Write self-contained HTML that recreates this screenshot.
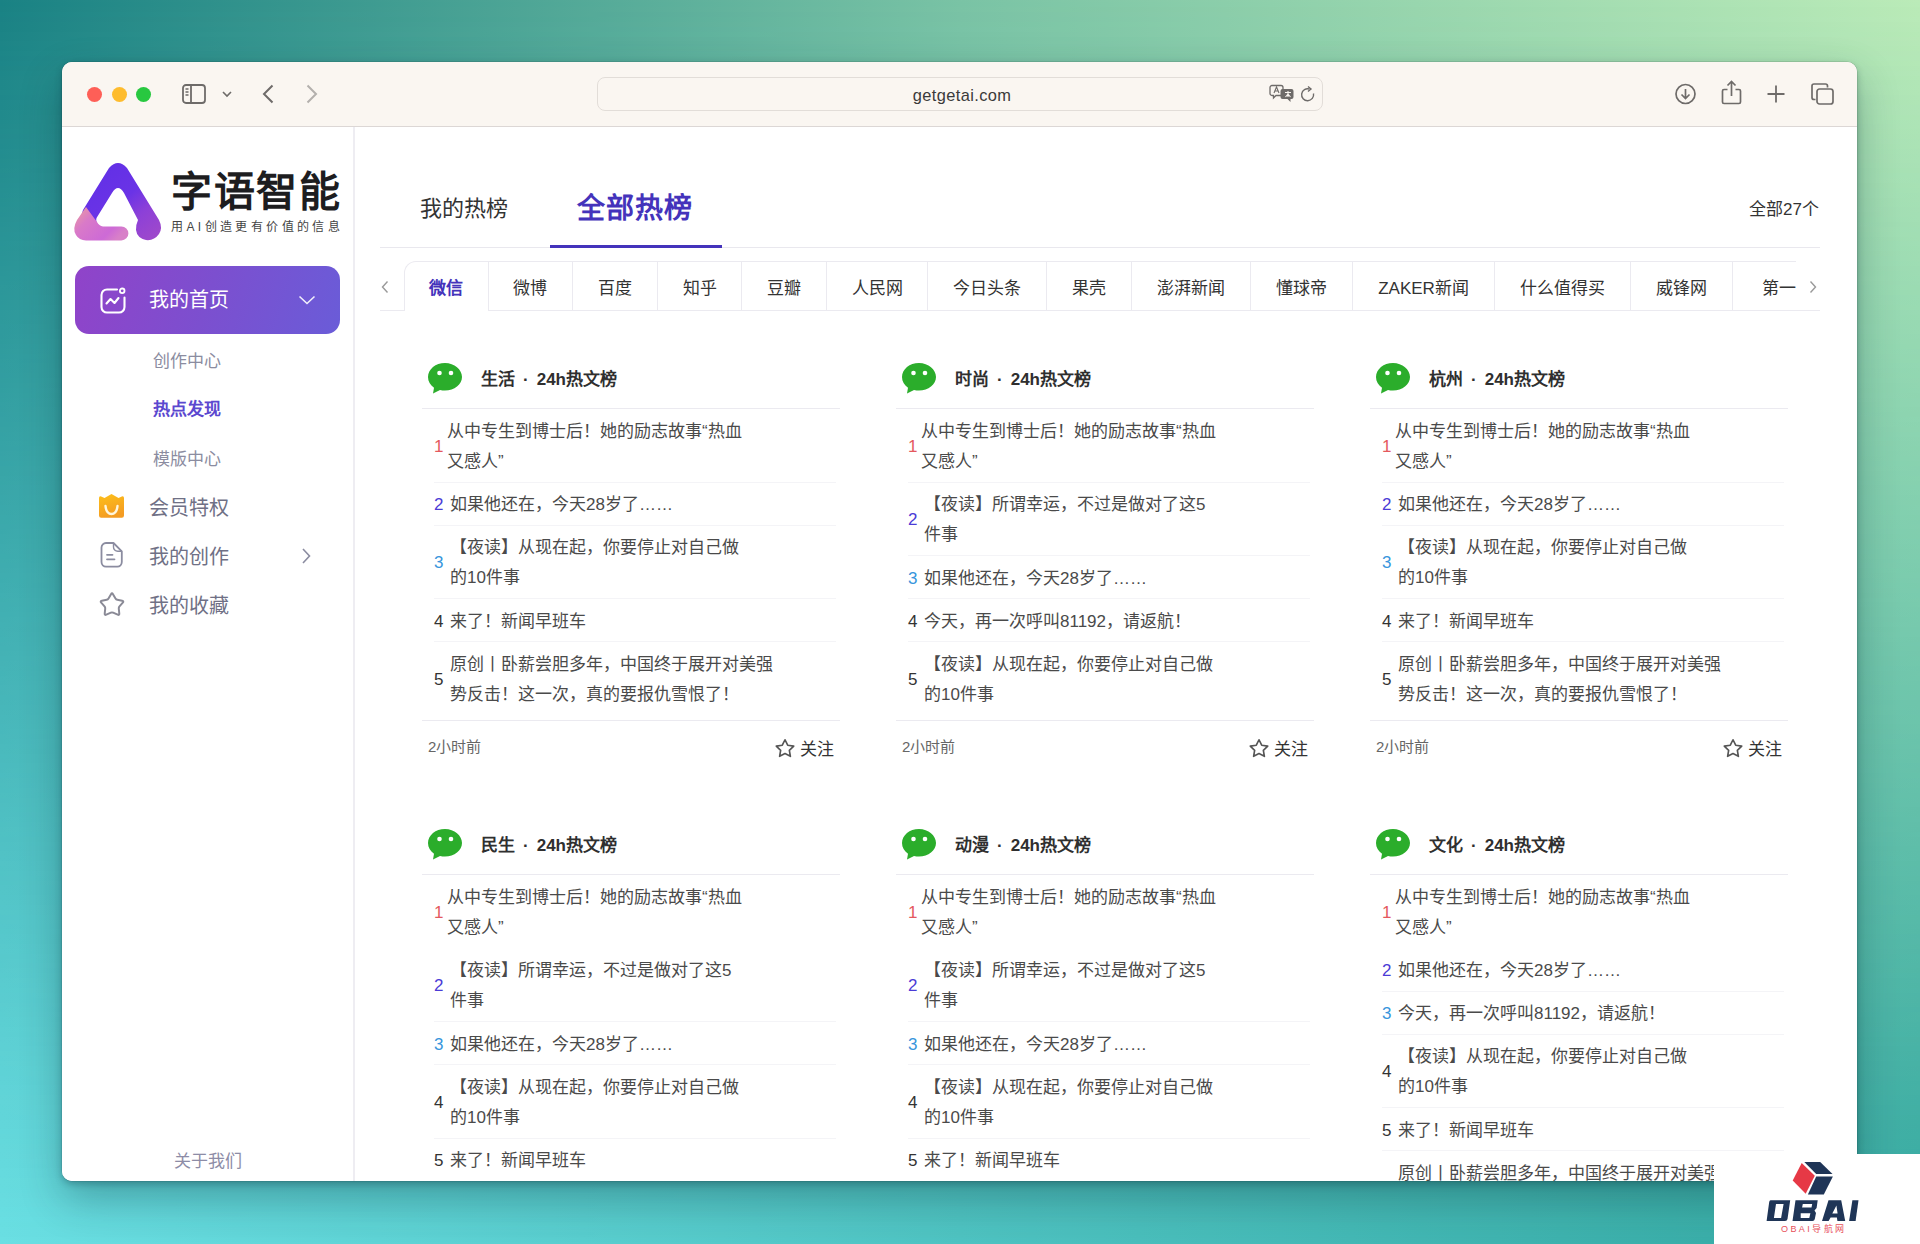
<!DOCTYPE html>
<html lang="zh-CN"><head><meta charset="utf-8">
<style>
*{box-sizing:border-box;margin:0;padding:0}
html,body{width:1920px;height:1244px;overflow:hidden}
body{position:relative;font-family:"Liberation Sans",sans-serif;color:#333;background:linear-gradient(to right,#1a8284 0%,#7ac3a5 50%,#bbebb8 100%)}
#bg2{position:absolute;left:0;top:0;width:1920px;height:1244px;background:linear-gradient(to right,#6adfe3 0%,#4ec3c2 50%,#33a8a2 100%);-webkit-mask-image:linear-gradient(to bottom,rgba(0,0,0,0) 0%,#000 100%);mask-image:linear-gradient(to bottom,rgba(0,0,0,0) 0%,#000 100%)}
#win{position:absolute;left:62px;top:62px;width:1795px;height:1119px;border-radius:10px;overflow:hidden;background:#fff;box-shadow:0 3px 7px rgba(0,40,50,.28),0 18px 42px rgba(0,40,50,.3),0 0 0 .5px rgba(0,0,0,.15)}
#pg{position:absolute;left:-62px;top:-62px;width:1920px;height:1244px}
.a{position:absolute;white-space:nowrap}
svg{position:absolute;overflow:visible}
#tb{position:absolute;left:62px;top:62px;width:1795px;height:65px;background:#faf6f1;border-bottom:1px solid #dcd7d5}
.dot{position:absolute;width:15px;height:15px;border-radius:50%;top:87px}
#url{position:absolute;left:597px;top:77px;width:726px;height:34px;border:1px solid #e2ddd8;border-radius:8px;background:#faf6f1;font-size:16.4px;color:#3a3a3a;text-align:center;line-height:35px;letter-spacing:.4px;padding-left:4px}
#side{position:absolute;left:62px;top:127px;width:293px;height:1054px;background:#fff;border-right:2px solid #eeedf2}
#navbtn{position:absolute;left:75px;top:266px;width:265px;height:68px;border-radius:14px;background:linear-gradient(108deg,#9043c9 0%,#7c4fcf 50%,#6a5cd8 100%)}
.sub{position:absolute;left:153px;font-size:17px;color:#8b8ca0;line-height:20px}
.nav{position:absolute;left:149px;font-size:20px;color:#6f7085;line-height:24px}
#wm{position:absolute;left:1714px;top:1154px;width:206px;height:90px;background:#fff}
.tab{position:absolute;top:262px;height:49px;line-height:54px;text-align:center;font-size:17px;color:#333;border-right:1px solid #ebeaf0}
.ln{position:absolute;height:1px;background:#ebeaf0}
.sep{position:absolute;height:1px;background:#f4f4f7}
.ct{position:absolute;font-size:17px;line-height:30px;color:#4a4a4a;white-space:nowrap}
.num{position:absolute;font-size:17px;line-height:30px;white-space:nowrap}
.ttl{position:absolute;font-size:17px;line-height:24px;color:#2f2f2f;font-weight:bold;white-space:nowrap}
.tm{position:absolute;font-size:15px;line-height:20px;color:#666;white-space:nowrap}
.fl{position:absolute;font-size:17px;line-height:24px;color:#333;white-space:nowrap}
</style></head><body>
<div id="bg2"></div>
<div id="win"><div id="pg">
<div id="tb"></div>
<div class="dot" style="left:87px;background:#fe5f57"></div>
<div class="dot" style="left:111.5px;background:#febc2e"></div>
<div class="dot" style="left:136px;background:#28c840"></div>
<svg style="left:181px;top:83px" width="26" height="22" viewBox="0 0 26 22"><rect x="2" y="2" width="22" height="18" rx="3" fill="none" stroke="#6e6b69" stroke-width="1.8"/><line x1="10" y1="2" x2="10" y2="20" stroke="#6e6b69" stroke-width="1.8"/><path d="M4.5 6h3M4.5 9h3M4.5 12h3" stroke="#6e6b69" stroke-width="1.3"/></svg>
<svg style="left:221px;top:89px" width="12" height="10" viewBox="0 0 12 10"><path d="M2 3l4 4 4-4" fill="none" stroke="#6e6b69" stroke-width="1.6"/></svg>
<svg style="left:260px;top:83px" width="16" height="22" viewBox="0 0 16 22"><path d="M12.5 2.5L4 11l8.5 8.5" fill="none" stroke="#6e6b69" stroke-width="2"/></svg>
<svg style="left:304px;top:83px" width="16" height="22" viewBox="0 0 16 22"><path d="M3.5 2.5L12 11l-8.5 8.5" fill="none" stroke="#b3b0ad" stroke-width="2"/></svg>
<div id="url">getgetai.com</div>
<svg style="left:1269px;top:84px" width="26" height="20" viewBox="0 0 26 20"><path d="M3 1.5h9a2 2 0 0 1 2 2v6a2 2 0 0 1-2 2H7l-2.5 2.5V11.5H3a2 2 0 0 1-2-2v-6a2 2 0 0 1 2-2z" fill="none" stroke="#6e6b69" stroke-width="1.3"/><path d="M5 9l2.5-6L10 9M6 7h3" fill="none" stroke="#6e6b69" stroke-width="1.1"/><path d="M13.5 5h9a2 2 0 0 1 2 2v6a2 2 0 0 1-2 2h-1v3l-3-3h-5a2 2 0 0 1-2-2V7a2 2 0 0 1 2-2z" fill="#6e6b69"/><path d="M16 8.5h6M19 7v6M16.5 13l2.5-3 2.5 3" fill="none" stroke="#faf6f1" stroke-width="1.1"/></svg>
<svg style="left:1300px;top:86px" width="18" height="18" viewBox="0 0 18 18"><path d="M13.5 7.5A6 6 0 1 1 9.5 3" fill="none" stroke="#6e6b69" stroke-width="1.4"/><path d="M8 0.5l3 2.5-3 2.5" fill="none" stroke="#6e6b69" stroke-width="1.4"/></svg>
<svg style="left:1674px;top:83px" width="24" height="24" viewBox="0 0 24 24"><circle cx="11.5" cy="11" r="9.5" fill="none" stroke="#6e6b69" stroke-width="1.7"/><path d="M11.5 6v9M7.5 11.5l4 4 4-4" fill="none" stroke="#6e6b69" stroke-width="1.7"/></svg>
<svg style="left:1720px;top:80px" width="24" height="26" viewBox="0 0 24 26"><path d="M7.5 9.5H4a1.5 1.5 0 0 0-1.5 1.5v11A1.5 1.5 0 0 0 4 23.5h15a1.5 1.5 0 0 0 1.5-1.5V11A1.5 1.5 0 0 0 19 9.5h-3.5M11.5 16V2M7.5 5.5l4-4 4 4" fill="none" stroke="#6e6b69" stroke-width="1.7"/></svg>
<svg style="left:1766px;top:84px" width="20" height="20" viewBox="0 0 20 20"><path d="M10 1.5v17M1.5 10h17" fill="none" stroke="#6e6b69" stroke-width="1.8"/></svg>
<svg style="left:1810px;top:82px" width="26" height="24" viewBox="0 0 26 24"><path d="M5.5 17.5H4A2 2 0 0 1 2 15.5V4a2 2 0 0 1 2-2h11.5a2 2 0 0 1 2 2v1.5" fill="none" stroke="#6e6b69" stroke-width="1.7"/><rect x="7" y="7" width="16" height="15" rx="2.5" fill="none" stroke="#6e6b69" stroke-width="1.7"/></svg>
<div id="side"></div>
<svg style="left:70px;top:158px" width="96" height="88" viewBox="0 0 96 88">
<defs>
<linearGradient id="lg1" x1="0.2" y1="0.1" x2="0.9" y2="0.95"><stop offset="0" stop-color="#6230e6"/><stop offset="0.45" stop-color="#6a33e6"/><stop offset="0.7" stop-color="#8c40d8"/><stop offset="1" stop-color="#9d48cc"/></linearGradient>
<linearGradient id="lg2" x1="0" y1="0" x2="1" y2="0.6"><stop offset="0" stop-color="#eca09a"/><stop offset="0.35" stop-color="#d97ac8"/><stop offset="0.8" stop-color="#cd6ad6"/><stop offset="1" stop-color="#d880c8"/></linearGradient>
</defs>
<path d="M13 52L39 10Q48 0 57 10L89 62Q93 70 89 76Q84 83 76 82Q67 80 66 72Q66 66 68 62L54 35Q48 25 42 35L26.5 60Q25 65 30 68.4L40 72L10 62Z" fill="url(#lg1)"/>
<path d="M16 49L7 62Q2 71 6 77Q9 82.4 16 82.4L51.4 82.4A7 7 0 0 0 51.4 68.4L33 68.4Q29 68 27 64Z" fill="url(#lg2)"/>
</svg>
<div class="a" style="left:171px;top:165px;font-size:41px;line-height:54px;color:#1d1d1f;font-weight:bold;letter-spacing:1.5px">字语智能</div>
<div class="a" style="left:171px;top:219px;font-size:12px;line-height:16px;color:#444;letter-spacing:3.4px">用AI创造更有价值的信息</div>
<div id="navbtn"></div>
<svg style="left:98px;top:286px" width="30" height="30" viewBox="0 0 30 30"><path d="M19 3.5H9A5.5 5.5 0 0 0 3.5 9v12A5.5 5.5 0 0 0 9 26.5h12A5.5 5.5 0 0 0 26.5 21V11.5" fill="none" stroke="#fff" stroke-width="2.1" stroke-linecap="round"/><circle cx="24.2" cy="4.8" r="2.3" fill="none" stroke="#fff" stroke-width="1.8"/><path d="M8.5 17.5l4-4.5 4 4 4-5" fill="none" stroke="#fff" stroke-width="2.1" stroke-linecap="round" stroke-linejoin="round"/></svg>
<div class="a nav" style="left:149px;top:288px;color:#fff">我的首页</div>
<svg style="left:297px;top:293px" width="20" height="14" viewBox="0 0 20 14"><path d="M2.5 3.5l7.5 7 7.5-7" fill="none" stroke="#fff" stroke-width="1.6" opacity=".9"/></svg>
<div class="a sub" style="top:351.5px">创作中心</div>
<div class="a sub" style="top:400px;color:#5b48cf;font-weight:bold">热点发现</div>
<div class="a sub" style="top:449.5px">模版中心</div>
<svg style="left:98px;top:493px" width="28" height="26" viewBox="0 0 28 26"><defs><linearGradient id="cg" x1="0" y1="0" x2="0.3" y2="1"><stop offset="0" stop-color="#fdc01a"/><stop offset="1" stop-color="#f49c22"/></linearGradient></defs><path d="M1 5Q1 2.8 3.2 3.5L6.5 5L13.5 1L20.5 5L23.8 3.5Q26 2.8 26 5V22.5Q26 24.7 23.8 24.7H3.2Q1 24.7 1 22.5Z" fill="url(#cg)"/><path d="M7.5 13c.5 5 3 8 6 8s5.5-3 6-8" fill="none" stroke="#fff6dc" stroke-width="2.4" stroke-linecap="round"/></svg>
<div class="a nav" style="top:495.5px">会员特权</div>
<svg style="left:99px;top:541px" width="26" height="28" viewBox="0 0 26 28"><path d="M14.5 2H7A4.5 4.5 0 0 0 2.5 6.5v14.6A4.5 4.5 0 0 0 7 25.6h11.3a4.5 4.5 0 0 0 4.5-4.5V10.3z" fill="none" stroke="#8b8ca0" stroke-width="1.8" stroke-linejoin="round"/><path d="M14.5 2v4a4.2 4.2 0 0 0 4.2 4.3h4.1" fill="none" stroke="#8b8ca0" stroke-width="1.4"/><path d="M8 13.8h5.5M8 18.3h7.5" stroke="#8b8ca0" stroke-width="1.8" stroke-linecap="round"/></svg>
<div class="a nav" style="top:544.8px">我的创作</div>
<svg style="left:299px;top:546px" width="14" height="20" viewBox="0 0 14 20"><path d="M4 3l6.5 7L4 17" fill="none" stroke="#8b8ca0" stroke-width="1.6"/></svg>
<svg style="left:98px;top:590px" width="28" height="28" viewBox="0 0 24 24"><path d="M11.15 3.55L11.15 3.55Q12.00 2.10 12.85 3.55L15.00 7.24Q15.53 8.15 16.55 8.37L20.72 9.28Q22.37 9.63 21.25 10.89L18.41 14.07Q17.71 14.85 17.81 15.90L18.24 20.15Q18.41 21.82 16.87 21.14L12.96 19.42Q12.00 19.00 11.04 19.42L7.13 21.14Q5.59 21.82 5.76 20.15L6.19 15.90Q6.29 14.85 5.59 14.07L2.75 10.89Q1.63 9.63 3.28 9.28L7.45 8.37Q8.47 8.15 9.00 7.24Z" fill="none" stroke="#8a8a96" stroke-width="1.7" stroke-linejoin="round"/></svg>
<div class="a nav" style="top:593.8px">我的收藏</div>
<div class="a sub" style="left:174px;top:1151.5px;color:#8d8ca6">关于我们</div>
<div class="ln" style="left:380px;top:247px;width:1440px;background:#e9e8ee"></div>
<div class="a" style="left:420px;top:194.5px;font-size:22px;line-height:28px;color:#333">我的热榜</div>
<div class="a" style="left:577px;top:189.5px;font-size:28px;line-height:38px;color:#4433bb;font-weight:bold;letter-spacing:1px">全部热榜</div>
<div class="a" style="left:550px;top:245px;width:172px;height:3px;background:#4433bb"></div>
<div class="a" style="left:1749px;top:198.5px;font-size:17px;line-height:22px;color:#333">全部27个</div>
<div style="position:absolute;left:380px;top:255px;width:1440px;height:60px;overflow:hidden">
<div class="ln" style="left:0;top:55px;width:1440px"></div>
<div class="tab" style="left:23.5px;top:6px;width:85.0px;border-left:1px solid #ebeaf0;border-top:1px solid #ebeaf0;border-top-left-radius:12px;background:#fff;height:50px;color:#4433bb;font-weight:bold">微信</div>
<div class="tab" style="left:108.5px;top:6px;width:84.5px;border-top:1px solid #ebeaf0;color:#333">微博</div>
<div class="tab" style="left:193.0px;top:6px;width:85.0px;border-top:1px solid #ebeaf0;color:#333">百度</div>
<div class="tab" style="left:278.0px;top:6px;width:84.0px;border-top:1px solid #ebeaf0;color:#333">知乎</div>
<div class="tab" style="left:362.0px;top:6px;width:85.0px;border-top:1px solid #ebeaf0;color:#333">豆瓣</div>
<div class="tab" style="left:447.0px;top:6px;width:101.0px;border-top:1px solid #ebeaf0;color:#333">人民网</div>
<div class="tab" style="left:548.0px;top:6px;width:119.0px;border-top:1px solid #ebeaf0;color:#333">今日头条</div>
<div class="tab" style="left:667.0px;top:6px;width:85.0px;border-top:1px solid #ebeaf0;color:#333">果壳</div>
<div class="tab" style="left:752.0px;top:6px;width:119.0px;border-top:1px solid #ebeaf0;color:#333">澎湃新闻</div>
<div class="tab" style="left:871.0px;top:6px;width:102.0px;border-top:1px solid #ebeaf0;color:#333">懂球帝</div>
<div class="tab" style="left:973.0px;top:6px;width:142.0px;border-top:1px solid #ebeaf0;color:#333">ZAKER新闻</div>
<div class="tab" style="left:1115.0px;top:6px;width:136.0px;border-top:1px solid #ebeaf0;color:#333">什么值得买</div>
<div class="tab" style="left:1251.0px;top:6px;width:102.0px;border-top:1px solid #ebeaf0;color:#333">威锋网</div>
<div class="tab" style="left:1353.0px;top:6px;width:127.0px;border-top:1px solid #ebeaf0;color:#333">第一财经</div>
</div>
<div class="a" style="left:1796px;top:258px;width:30px;height:52px;background:#fff"></div>
<svg style="left:380px;top:280px" width="10" height="14" viewBox="0 0 10 14"><path d="M7.5 1.5L2.5 7l5 5.5" fill="none" stroke="#999" stroke-width="1.4"/></svg>
<svg style="left:1808px;top:280px" width="10" height="14" viewBox="0 0 10 14"><path d="M2.5 1.5L7.5 7l-5 5.5" fill="none" stroke="#999" stroke-width="1.4"/></svg>
<svg style="left:428px;top:363px" width="34" height="31" viewBox="0 0 34 31">
<path d="M17 0C7.6 0 0 6.2 0 14c0 4.3 2.3 8.2 6 10.8L5 30.5l7-3.6c1.6.4 3.3.6 5 .6 9.4 0 17-6.2 17-13.5S26.4 0 17 0z" fill="#2bad2b"/>
<circle cx="11.5" cy="10" r="2.3" fill="#fff"/><circle cx="23" cy="10" r="2.3" fill="#fff"/></svg>
<div class="ttl" style="left:481px;top:368.2px">生活<span style="padding:0 8px 0 8px">·</span>24h热文榜</div>
<div class="ln" style="left:422px;top:408px;width:418px"></div>
<div class="num" style="left:434px;top:431.5px;color:#e4585e">1</div>
<div class="ct" style="left:447px;top:416.8px">从中专生到博士后！她的励志故事“热血<br>又感人”</div>
<div class="sep" style="left:434px;top:481.5px;width:402px"></div>
<div class="num" style="left:434px;top:490.0px;color:#4b3bd6">2</div>
<div class="ct" style="left:450px;top:490.3px">如果他还在，今天28岁了……</div>
<div class="sep" style="left:434px;top:524.5px;width:402px"></div>
<div class="num" style="left:434px;top:548.0px;color:#3795dc">3</div>
<div class="ct" style="left:450px;top:533.3px">【夜读】从现在起，你要停止对自己做<br>的10件事</div>
<div class="sep" style="left:434px;top:598.0px;width:402px"></div>
<div class="num" style="left:434px;top:606.5px;color:#333">4</div>
<div class="ct" style="left:450px;top:606.8px">来了！新闻早班车</div>
<div class="sep" style="left:434px;top:641.0px;width:402px"></div>
<div class="num" style="left:434px;top:664.5px;color:#333">5</div>
<div class="ct" style="left:450px;top:649.8px">原创丨卧薪尝胆多年，中国终于展开对美强<br>势反击！这一次，真的要报仇雪恨了！</div>
<div class="ln" style="left:422px;top:720px;width:418px"></div>
<div class="tm" style="left:428px;top:737px">2小时前</div>
<svg style="left:773.5px;top:737px" width="22" height="22" viewBox="0 0 24 24"><path d="M12.00 3.00L14.94 8.95L21.51 9.91L16.76 14.55L17.88 21.09L12.00 18.00L6.12 21.09L7.24 14.55L2.49 9.91L9.06 8.95Z" fill="none" stroke="#555" stroke-width="1.8" stroke-linejoin="round"/></svg>
<div class="fl" style="left:800px;top:737.5px">关注</div><svg style="left:902px;top:363px" width="34" height="31" viewBox="0 0 34 31">
<path d="M17 0C7.6 0 0 6.2 0 14c0 4.3 2.3 8.2 6 10.8L5 30.5l7-3.6c1.6.4 3.3.6 5 .6 9.4 0 17-6.2 17-13.5S26.4 0 17 0z" fill="#2bad2b"/>
<circle cx="11.5" cy="10" r="2.3" fill="#fff"/><circle cx="23" cy="10" r="2.3" fill="#fff"/></svg>
<div class="ttl" style="left:955px;top:368.2px">时尚<span style="padding:0 8px 0 8px">·</span>24h热文榜</div>
<div class="ln" style="left:896px;top:408px;width:418px"></div>
<div class="num" style="left:908px;top:431.5px;color:#e4585e">1</div>
<div class="ct" style="left:921px;top:416.8px">从中专生到博士后！她的励志故事“热血<br>又感人”</div>
<div class="sep" style="left:908px;top:481.5px;width:402px"></div>
<div class="num" style="left:908px;top:505.0px;color:#4b3bd6">2</div>
<div class="ct" style="left:924px;top:490.3px">【夜读】所谓幸运，不过是做对了这5<br>件事</div>
<div class="sep" style="left:908px;top:555.0px;width:402px"></div>
<div class="num" style="left:908px;top:563.5px;color:#3795dc">3</div>
<div class="ct" style="left:924px;top:563.8px">如果他还在，今天28岁了……</div>
<div class="sep" style="left:908px;top:598.0px;width:402px"></div>
<div class="num" style="left:908px;top:606.5px;color:#333">4</div>
<div class="ct" style="left:924px;top:606.8px">今天，再一次呼叫81192，请返航！</div>
<div class="sep" style="left:908px;top:641.0px;width:402px"></div>
<div class="num" style="left:908px;top:664.5px;color:#333">5</div>
<div class="ct" style="left:924px;top:649.8px">【夜读】从现在起，你要停止对自己做<br>的10件事</div>
<div class="ln" style="left:896px;top:720px;width:418px"></div>
<div class="tm" style="left:902px;top:737px">2小时前</div>
<svg style="left:1247.5px;top:737px" width="22" height="22" viewBox="0 0 24 24"><path d="M12.00 3.00L14.94 8.95L21.51 9.91L16.76 14.55L17.88 21.09L12.00 18.00L6.12 21.09L7.24 14.55L2.49 9.91L9.06 8.95Z" fill="none" stroke="#555" stroke-width="1.8" stroke-linejoin="round"/></svg>
<div class="fl" style="left:1274px;top:737.5px">关注</div><svg style="left:1376px;top:363px" width="34" height="31" viewBox="0 0 34 31">
<path d="M17 0C7.6 0 0 6.2 0 14c0 4.3 2.3 8.2 6 10.8L5 30.5l7-3.6c1.6.4 3.3.6 5 .6 9.4 0 17-6.2 17-13.5S26.4 0 17 0z" fill="#2bad2b"/>
<circle cx="11.5" cy="10" r="2.3" fill="#fff"/><circle cx="23" cy="10" r="2.3" fill="#fff"/></svg>
<div class="ttl" style="left:1429px;top:368.2px">杭州<span style="padding:0 8px 0 8px">·</span>24h热文榜</div>
<div class="ln" style="left:1370px;top:408px;width:418px"></div>
<div class="num" style="left:1382px;top:431.5px;color:#e4585e">1</div>
<div class="ct" style="left:1395px;top:416.8px">从中专生到博士后！她的励志故事“热血<br>又感人”</div>
<div class="sep" style="left:1382px;top:481.5px;width:402px"></div>
<div class="num" style="left:1382px;top:490.0px;color:#4b3bd6">2</div>
<div class="ct" style="left:1398px;top:490.3px">如果他还在，今天28岁了……</div>
<div class="sep" style="left:1382px;top:524.5px;width:402px"></div>
<div class="num" style="left:1382px;top:548.0px;color:#3795dc">3</div>
<div class="ct" style="left:1398px;top:533.3px">【夜读】从现在起，你要停止对自己做<br>的10件事</div>
<div class="sep" style="left:1382px;top:598.0px;width:402px"></div>
<div class="num" style="left:1382px;top:606.5px;color:#333">4</div>
<div class="ct" style="left:1398px;top:606.8px">来了！新闻早班车</div>
<div class="sep" style="left:1382px;top:641.0px;width:402px"></div>
<div class="num" style="left:1382px;top:664.5px;color:#333">5</div>
<div class="ct" style="left:1398px;top:649.8px">原创丨卧薪尝胆多年，中国终于展开对美强<br>势反击！这一次，真的要报仇雪恨了！</div>
<div class="ln" style="left:1370px;top:720px;width:418px"></div>
<div class="tm" style="left:1376px;top:737px">2小时前</div>
<svg style="left:1721.5px;top:737px" width="22" height="22" viewBox="0 0 24 24"><path d="M12.00 3.00L14.94 8.95L21.51 9.91L16.76 14.55L17.88 21.09L12.00 18.00L6.12 21.09L7.24 14.55L2.49 9.91L9.06 8.95Z" fill="none" stroke="#555" stroke-width="1.8" stroke-linejoin="round"/></svg>
<div class="fl" style="left:1748px;top:737.5px">关注</div><svg style="left:428px;top:829px" width="34" height="31" viewBox="0 0 34 31">
<path d="M17 0C7.6 0 0 6.2 0 14c0 4.3 2.3 8.2 6 10.8L5 30.5l7-3.6c1.6.4 3.3.6 5 .6 9.4 0 17-6.2 17-13.5S26.4 0 17 0z" fill="#2bad2b"/>
<circle cx="11.5" cy="10" r="2.3" fill="#fff"/><circle cx="23" cy="10" r="2.3" fill="#fff"/></svg>
<div class="ttl" style="left:481px;top:834.2px">民生<span style="padding:0 8px 0 8px">·</span>24h热文榜</div>
<div class="ln" style="left:422px;top:874px;width:418px"></div>
<div class="num" style="left:434px;top:897.5px;color:#e4585e">1</div>
<div class="ct" style="left:447px;top:882.8px">从中专生到博士后！她的励志故事“热血<br>又感人”</div>
<div class="num" style="left:434px;top:971.0px;color:#4b3bd6">2</div>
<div class="ct" style="left:450px;top:956.3px">【夜读】所谓幸运，不过是做对了这5<br>件事</div>
<div class="sep" style="left:434px;top:1021.0px;width:402px"></div>
<div class="num" style="left:434px;top:1029.5px;color:#3795dc">3</div>
<div class="ct" style="left:450px;top:1029.8px">如果他还在，今天28岁了……</div>
<div class="sep" style="left:434px;top:1064.0px;width:402px"></div>
<div class="num" style="left:434px;top:1087.5px;color:#333">4</div>
<div class="ct" style="left:450px;top:1072.8px">【夜读】从现在起，你要停止对自己做<br>的10件事</div>
<div class="sep" style="left:434px;top:1137.5px;width:402px"></div>
<div class="num" style="left:434px;top:1146.0px;color:#333">5</div>
<div class="ct" style="left:450px;top:1146.3px">来了！新闻早班车</div>
<div class="ln" style="left:422px;top:1186px;width:418px"></div>
<div class="tm" style="left:428px;top:1203px">2小时前</div>
<svg style="left:773.5px;top:1203px" width="22" height="22" viewBox="0 0 24 24"><path d="M12.00 3.00L14.94 8.95L21.51 9.91L16.76 14.55L17.88 21.09L12.00 18.00L6.12 21.09L7.24 14.55L2.49 9.91L9.06 8.95Z" fill="none" stroke="#555" stroke-width="1.8" stroke-linejoin="round"/></svg>
<div class="fl" style="left:800px;top:1203.5px">关注</div><svg style="left:902px;top:829px" width="34" height="31" viewBox="0 0 34 31">
<path d="M17 0C7.6 0 0 6.2 0 14c0 4.3 2.3 8.2 6 10.8L5 30.5l7-3.6c1.6.4 3.3.6 5 .6 9.4 0 17-6.2 17-13.5S26.4 0 17 0z" fill="#2bad2b"/>
<circle cx="11.5" cy="10" r="2.3" fill="#fff"/><circle cx="23" cy="10" r="2.3" fill="#fff"/></svg>
<div class="ttl" style="left:955px;top:834.2px">动漫<span style="padding:0 8px 0 8px">·</span>24h热文榜</div>
<div class="ln" style="left:896px;top:874px;width:418px"></div>
<div class="num" style="left:908px;top:897.5px;color:#e4585e">1</div>
<div class="ct" style="left:921px;top:882.8px">从中专生到博士后！她的励志故事“热血<br>又感人”</div>
<div class="num" style="left:908px;top:971.0px;color:#4b3bd6">2</div>
<div class="ct" style="left:924px;top:956.3px">【夜读】所谓幸运，不过是做对了这5<br>件事</div>
<div class="sep" style="left:908px;top:1021.0px;width:402px"></div>
<div class="num" style="left:908px;top:1029.5px;color:#3795dc">3</div>
<div class="ct" style="left:924px;top:1029.8px">如果他还在，今天28岁了……</div>
<div class="sep" style="left:908px;top:1064.0px;width:402px"></div>
<div class="num" style="left:908px;top:1087.5px;color:#333">4</div>
<div class="ct" style="left:924px;top:1072.8px">【夜读】从现在起，你要停止对自己做<br>的10件事</div>
<div class="sep" style="left:908px;top:1137.5px;width:402px"></div>
<div class="num" style="left:908px;top:1146.0px;color:#333">5</div>
<div class="ct" style="left:924px;top:1146.3px">来了！新闻早班车</div>
<div class="ln" style="left:896px;top:1186px;width:418px"></div>
<div class="tm" style="left:902px;top:1203px">2小时前</div>
<svg style="left:1247.5px;top:1203px" width="22" height="22" viewBox="0 0 24 24"><path d="M12.00 3.00L14.94 8.95L21.51 9.91L16.76 14.55L17.88 21.09L12.00 18.00L6.12 21.09L7.24 14.55L2.49 9.91L9.06 8.95Z" fill="none" stroke="#555" stroke-width="1.8" stroke-linejoin="round"/></svg>
<div class="fl" style="left:1274px;top:1203.5px">关注</div><svg style="left:1376px;top:829px" width="34" height="31" viewBox="0 0 34 31">
<path d="M17 0C7.6 0 0 6.2 0 14c0 4.3 2.3 8.2 6 10.8L5 30.5l7-3.6c1.6.4 3.3.6 5 .6 9.4 0 17-6.2 17-13.5S26.4 0 17 0z" fill="#2bad2b"/>
<circle cx="11.5" cy="10" r="2.3" fill="#fff"/><circle cx="23" cy="10" r="2.3" fill="#fff"/></svg>
<div class="ttl" style="left:1429px;top:834.2px">文化<span style="padding:0 8px 0 8px">·</span>24h热文榜</div>
<div class="ln" style="left:1370px;top:874px;width:418px"></div>
<div class="num" style="left:1382px;top:897.5px;color:#e4585e">1</div>
<div class="ct" style="left:1395px;top:882.8px">从中专生到博士后！她的励志故事“热血<br>又感人”</div>
<div class="num" style="left:1382px;top:956.0px;color:#4b3bd6">2</div>
<div class="ct" style="left:1398px;top:956.3px">如果他还在，今天28岁了……</div>
<div class="sep" style="left:1382px;top:990.5px;width:402px"></div>
<div class="num" style="left:1382px;top:999.0px;color:#3795dc">3</div>
<div class="ct" style="left:1398px;top:999.3px">今天，再一次呼叫81192，请返航！</div>
<div class="sep" style="left:1382px;top:1033.5px;width:402px"></div>
<div class="num" style="left:1382px;top:1057.0px;color:#333">4</div>
<div class="ct" style="left:1398px;top:1042.3px">【夜读】从现在起，你要停止对自己做<br>的10件事</div>
<div class="sep" style="left:1382px;top:1107.0px;width:402px"></div>
<div class="num" style="left:1382px;top:1115.5px;color:#333">5</div>
<div class="ct" style="left:1398px;top:1115.8px">来了！新闻早班车</div>
<div class="sep" style="left:1382px;top:1150.0px;width:402px"></div>
<div class="num" style="left:1382px;top:1173.5px;color:#333">6</div>
<div class="ct" style="left:1398px;top:1158.8px">原创丨卧薪尝胆多年，中国终于展开对美强<br>势反击！这一次，真的要报仇雪恨了！</div>
<div class="ln" style="left:1370px;top:1186px;width:418px"></div>
<div class="tm" style="left:1376px;top:1203px">2小时前</div>
<svg style="left:1721.5px;top:1203px" width="22" height="22" viewBox="0 0 24 24"><path d="M12.00 3.00L14.94 8.95L21.51 9.91L16.76 14.55L17.88 21.09L12.00 18.00L6.12 21.09L7.24 14.55L2.49 9.91L9.06 8.95Z" fill="none" stroke="#555" stroke-width="1.8" stroke-linejoin="round"/></svg>
<div class="fl" style="left:1748px;top:1203.5px">关注</div>
</div></div>
<div id="wm"></div>
<svg style="left:1760px;top:1158px" width="100" height="70" viewBox="0 0 100 70">
<path d="M41.7 5L54.8 17.7L45.7 35.8L32.7 22.4Z" fill="#e63946"/>
<path d="M44.3 4L60.2 4L72.5 15.9L56.2 15.9Z" fill="#1f3557"/>
<path d="M56.2 18.4L72.9 18.4L63.8 36.5L47.9 36.5Z" fill="#1f3557"/>
<path fill-rule="evenodd" fill="#1f3557" d="M10.5 42.3L30.2 42.3L27.5 61Q27.2 63 25 63L6.6 63L9.2 44Q9.5 42.3 10.5 42.3ZM16 46L23.6 46L21.1 60L13.9 60Z"/>
<path fill-rule="evenodd" fill="#1f3557" d="M35.5 42.3L57.7 42.3L56.6 50L54.5 52.5L56 55L54.8 61Q54.4 63 52.5 63L32.5 63ZM42.8 45.9L52.2 45.9L51.5 49.5L42.1 49.5ZM40.7 55.3L50.4 55.3L49.3 60L40.7 60Z"/>
<path fill-rule="evenodd" fill="#1f3557" d="M68.5 42.3L81.2 42.3L85.2 63L77.4 63L76.9 59.5L70.6 59.5L68.6 63L62 63ZM72.3 55.5L77.6 55.5L76.4 47.5Z"/>
<path fill="#1f3557" d="M92.4 42.3L98.5 42.3L95.6 63L89.1 63Z"/>
</svg>
<div class="a" style="left:1781px;top:1223px;font-size:9px;line-height:13px;color:#e8505a;letter-spacing:2.4px">OBAI导航网</div>
</body></html>
